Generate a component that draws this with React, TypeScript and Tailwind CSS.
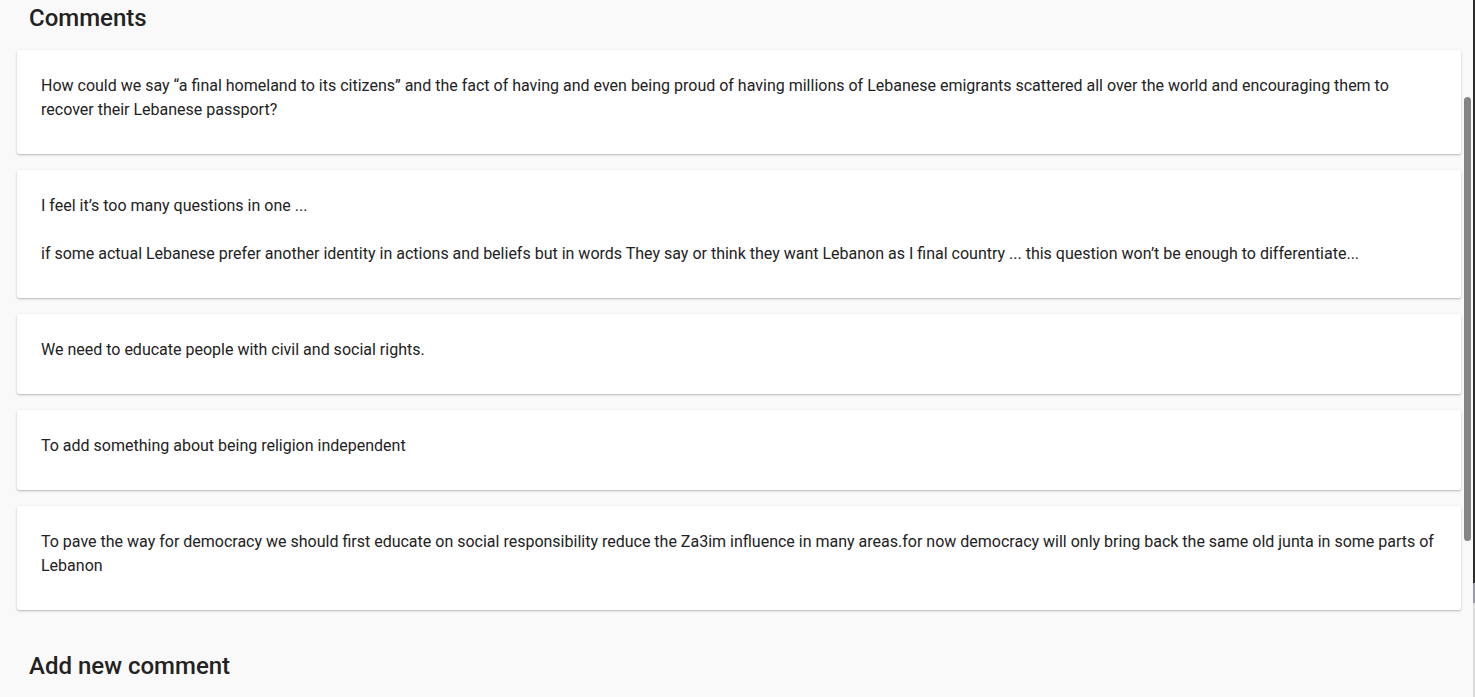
import React from "react";

const comments: string[][] = [
  [
    "How could we say “a final homeland to its citizens” and the fact of having and even being proud of having millions of Lebanese emigrants scattered all over the world and encouraging them to recover their Lebanese passport?",
  ],
  [
    "I feel it’s too many questions in one ...",
    "",
    "if some actual Lebanese prefer another identity in actions and beliefs but in words They say or think they want Lebanon as I final country ... this question won’t be enough to differentiate...",
  ],
  ["We need to educate people with civil and social rights."],
  ["To add something about being religion independent"],
  [
    "To pave the way for democracy we should first educate on social responsibility reduce the Za3im influence in many areas.for now democracy will only bring back the same old junta in some parts of Lebanon",
  ],
];

export default function App() {
  return (
    <div
      className="flex h-[697px] w-[1475px] overflow-hidden bg-[#f9f9f9] text-[#222]"
      style={{ fontFamily: "Roboto, 'Noto Sans', Arial, sans-serif" }}
    >
      <div className="w-[1462px] shrink-0 pt-[2px]">
        <h2 className="ml-[29px] text-[24px] font-medium leading-8 text-[#222]">Comments</h2>
        <div className="mt-4 flex flex-col gap-4 pl-[17px] pr-[1px]">
          {comments.map((lines, i) => (
            <div
              key={i}
              className="rounded-[2px] bg-white px-6 pt-6 pb-8 shadow-[0_1px_3px_rgba(0,0,0,0.18),0_1px_1px_rgba(0,0,0,0.1)]"
            >
              {lines.map((l, j) => (
                <p key={j} className="min-h-6 text-[16px] leading-6 text-[#222]">
                  {l}
                </p>
              ))}
            </div>
          ))}
        </div>
        <h2 className="ml-[29px] mt-10 text-[24px] font-medium leading-8 text-[#222]">Add new comment</h2>
      </div>
      <div className="w-[11px] shrink-0 pl-[2px] pt-[97px]">
        <div className="h-[444px] w-[7px] rounded-full bg-[#858585]" />
      </div>
      <div className="flex w-[2px] shrink-0 flex-col">
        <div className="h-[583px] bg-[#2a2a2a]" />
        <div className="h-[20px] bg-[#9a9aa2]" />
        <div className="flex-1 bg-[#dcdcdc]" />
      </div>
    </div>
  );
}
